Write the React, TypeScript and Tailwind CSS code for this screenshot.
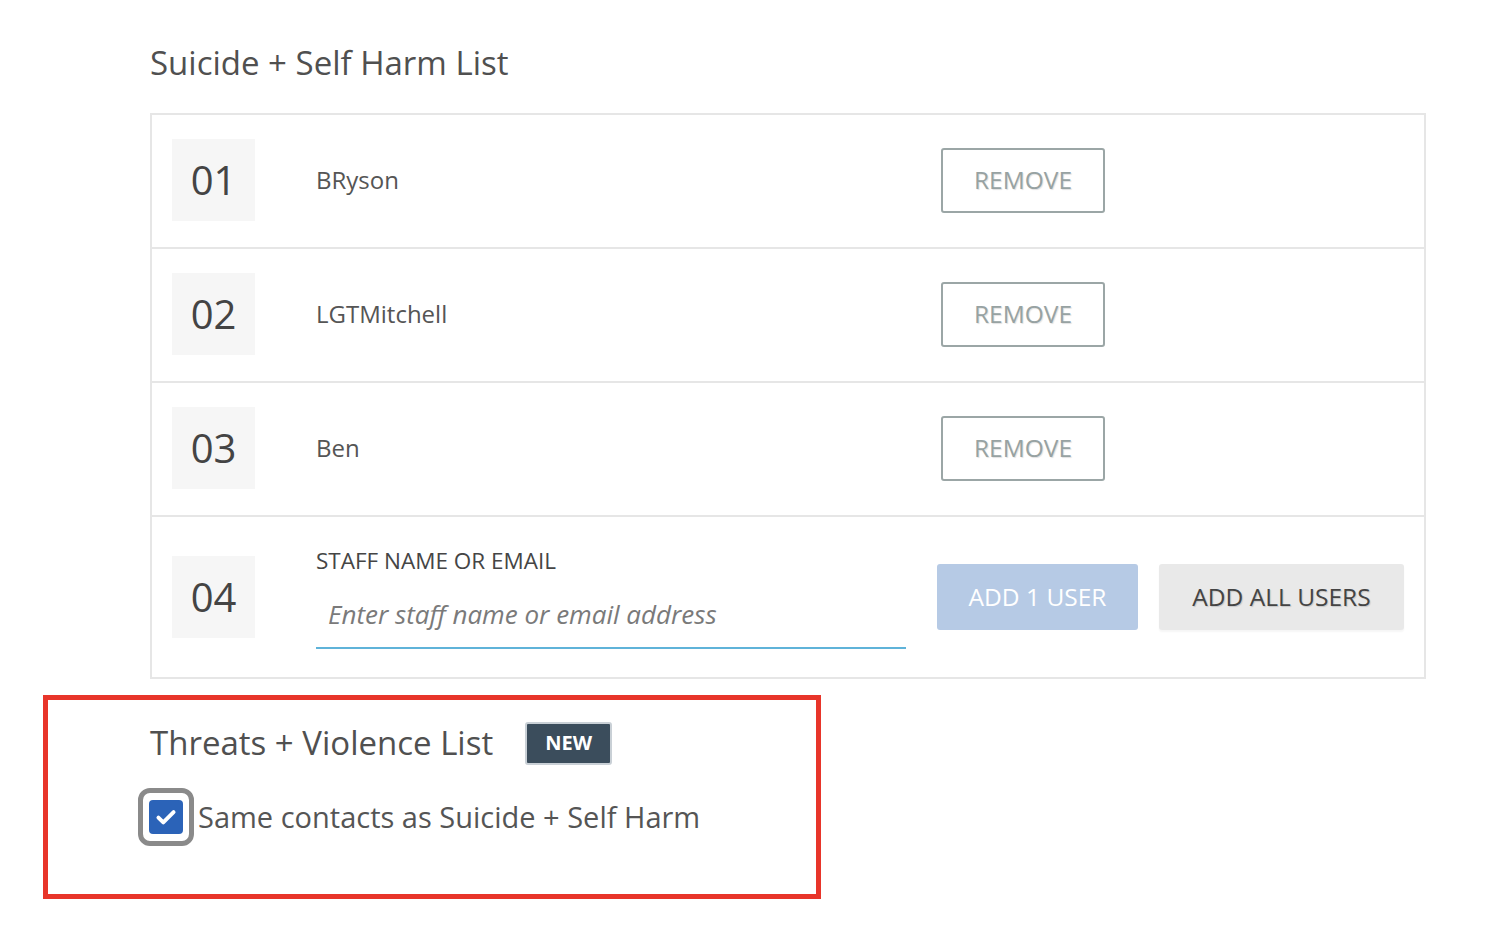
const font = { fontFamily: '"Open Sans", "Noto Sans", Arial, sans-serif' };

const members = [
  { no: "01", name: "BRyson" },
  { no: "02", name: "LGTMitchell" },
  { no: "03", name: "Ben" },
];

function NumberBox({ no }: { no: string }) {
  return (
    <div className="flex h-[82px] w-[83px] shrink-0 items-center justify-center bg-[#f6f6f6] text-[40px] text-[#444]">
      {no}
    </div>
  );
}

export default function App() {
  return (
    <div className="min-h-[946px] bg-white pt-[40px] text-[#555]" style={font}>
      <div className="pl-[150px]">
        <h2 className="mb-[27px] text-[33px] leading-[46px] text-[#505050]">
          Suicide + Self Harm List
        </h2>
        <div className="w-[1276px] border-2 border-[#e6e6e6]">
          {members.map((m) => (
            <div
              key={m.no}
              className="flex h-[134px] items-center border-b-2 border-[#e6e6e6] pl-[20px] pb-[2px]"
            >
              <NumberBox no={m.no} />
              <div className="ml-[61px] w-[590px] text-[24px] text-[#555]">{m.name}</div>
              <button className="ml-[35px] h-[65px] w-[164px] rounded-[3px] border-2 border-[#9ba6a6] text-[24.5px] text-[#97a2a2] [text-shadow:1px_1px_1px_rgba(0,0,0,0.12)]">
                REMOVE
              </button>
            </div>
          ))}
          <div className="flex h-[160px] items-center pl-[20px]">
            <NumberBox no="04" />
            <div className="ml-[61px] w-[590px]">
              <div className="text-[22.5px] leading-[30px] text-[#454545]">STAFF NAME OR EMAIL</div>
              <input
                className="mt-[17px] h-[56px] w-full border-b-2 border-[#5fb3d9] px-[12px] pb-[12px] text-[26px] italic text-[#555] outline-none placeholder:text-[#7a7a7a]"
                placeholder="Enter staff name or email address"
              />
            </div>
            <button className="ml-[31px] h-[66px] w-[201px] rounded-[3px] bg-[#b6cae5] text-[24.5px] text-white">
              ADD 1 USER
            </button>
            <button className="ml-[21px] h-[66px] w-[245px] rounded-[3px] bg-[#e9e9e9] text-[24.5px] text-[#444] shadow-[0_2px_2px_rgba(0,0,0,0.04)] [text-shadow:1px_1px_1px_rgba(0,0,0,0.15)]">
              ADD ALL USERS
            </button>
          </div>
        </div>
      </div>

      <div className="ml-[43px] mt-[16px] h-[204px] w-[778px] border-[5px] border-[#e8352a] pl-[102px] pt-[20px]">
        <div className="flex items-center">
          <h2 className="text-[33px] leading-[46px] text-[#505050]">Threats + Violence List</h2>
          <span className="ml-[32px] flex h-[43px] w-[87px] items-center justify-center rounded-[3px] border-2 border-[#c9d0d6] bg-[#3b4d5c] text-[20px] font-bold text-white">
            NEW
          </span>
        </div>
        <label className="-ml-[12px] mt-[22px] flex items-center">
          <span className="flex h-[58px] w-[56px] shrink-0 items-center justify-center rounded-[12px] border-[5px] border-[#8a8a8a] bg-white">
            <span className="flex h-[34px] w-[34px] items-center justify-center rounded-[4px] bg-[#2b63b8]">
              <svg width="26" height="26" viewBox="0 0 24 24" fill="none" stroke="white" strokeWidth="3.6" strokeLinecap="round" strokeLinejoin="round">
                <path d="M5 12.5l4.5 4.5L19 7.5" />
              </svg>
            </span>
          </span>
          <span className="ml-[4px] text-[29px] text-[#555]">Same contacts as Suicide + Self Harm</span>
        </label>
      </div>
    </div>
  );
}
